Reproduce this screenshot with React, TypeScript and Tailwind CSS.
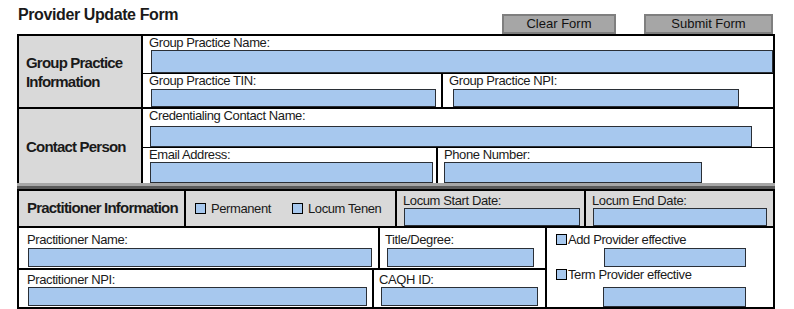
import React from 'react';

const Field = ({ className }: { className: string }) => (
  <div className={`bg-[#a7c8ee] border border-[#2a2f36] ${className}`} />
);

const Box = () => (
  <span className="inline-block w-[11px] h-[11px] shrink-0 bg-[#a7c8ee] border border-black" />
);

const Label = ({ children, className = '' }: { children: React.ReactNode; className?: string }) => (
  <div className={`text-[13px] leading-[14px] tracking-[-0.4px] whitespace-nowrap ${className}`}>{children}</div>
);

const App: React.FC = () => {
  return (
    <div className="w-[794px] h-[309px] overflow-hidden bg-white font-['Liberation_Sans',Arial,sans-serif] text-[#1a1a1a]">
      {/* Header */}
      <div className="flex h-[34px]">
        <h1 className="pl-[18px] pt-[6px] text-[16px] leading-[18px] font-bold tracking-[-0.4px]">
          Provider Update Form
        </h1>
        <div className="ml-auto mr-[21px] mt-[14px] flex gap-[28px]">
          <button className="w-[114px] h-[20px] bg-[#a6a6a6] border-2 border-[#7f7f7f] text-[13px] leading-[16px] text-[#111]">
            Clear Form
          </button>
          <button className="w-[129px] h-[20px] bg-[#a6a6a6] border-2 border-[#7f7f7f] text-[13px] leading-[16px] text-[#111]">
            Submit Form
          </button>
        </div>
      </div>

      {/* Group practice + contact */}
      <div className="ml-[17px] w-[758px] border-x-2 border-t-2 border-black">
        <div className="flex border-b-2 border-black">
          <div className="w-[124px] bg-[#d9d9d9] border-r-2 border-black flex items-center pl-[7px] text-[15px] leading-[19px] font-bold tracking-[-0.8px]">
            Group Practice
            <br />
            Information
          </div>
          <div className="flex-1 flex flex-col">
            <div className="h-[38px] border-b border-black">
              <Label className="pl-[6px]">Group Practice Name:</Label>
              <Field className="ml-[8px] h-[23px]" />
            </div>
            <div className="flex h-[33px]">
              <div className="w-[300px] border-r-2 border-black">
                <Label className="pl-[6px]">Group Practice TIN:</Label>
                <Field className="mt-[1px] ml-[8px] mr-[5px] h-[18px]" />
              </div>
              <div className="flex-1">
                <Label className="pl-[6px]">Group Practice NPI:</Label>
                <Field className="mt-[1px] ml-[10px] w-[286px] h-[18px]" />
              </div>
            </div>
          </div>
        </div>

        <div className="flex">
          <div className="w-[124px] bg-[#d9d9d9] border-r-2 border-black flex items-center pl-[7px] text-[15px] leading-[19px] font-bold tracking-[-0.8px]">
            Contact Person
          </div>
          <div className="flex-1 flex flex-col">
            <div className="h-[39px] border-b border-black">
              <Label className="pl-[6px]">Credentialing Contact Name:</Label>
              <Field className="mt-[3px] ml-[7px] w-[602px] h-[21px]" />
            </div>
            <div className="flex h-[35px]">
              <div className="w-[295px] border-r-2 border-black">
                <Label className="pl-[6px]">Email Address:</Label>
                <Field className="ml-[7px] mr-[3px] h-[21px]" />
              </div>
              <div className="flex-1">
                <Label className="pl-[6px]">Phone Number:</Label>
                <Field className="ml-[6px] w-[258px] h-[21px]" />
              </div>
            </div>
          </div>
        </div>
      </div>

      {/* Separator band */}
      <div className="ml-[17px] w-[758px] h-[3px] bg-[#a6a6a6]" />
      <div className="ml-[17px] w-[758px] h-[3px] bg-[#5a5a5a]" />

      {/* Practitioner */}
      <div className="ml-[17px] w-[758px] border-2 border-black">
        <div className="flex h-[37px] bg-[#d9d9d9] border-b-2 border-black">
          <div className="w-[167px] border-r-2 border-black flex items-center pl-[8px] text-[15px] font-bold tracking-[-0.8px] whitespace-nowrap">
            Practitioner Information
          </div>
          <div className="w-[211px] border-r-2 border-black flex items-center pl-[9px] text-[13px] leading-[14px] tracking-[-0.4px] whitespace-nowrap">
            <Box />
            <span className="ml-[5px]">Permanent</span>
            <span className="ml-[21px] flex">
              <Box />
            </span>
            <span className="ml-[5px]">Locum Tenen</span>
          </div>
          <div className="w-[189px] border-r-2 border-black pt-[3px]">
            <Label className="pl-[6px]">Locum Start Date:</Label>
            <Field className="ml-[7px] w-[176px] h-[18px]" />
          </div>
          <div className="flex-1 pt-[3px]">
            <Label className="pl-[6px]">Locum End Date:</Label>
            <Field className="ml-[7px] w-[174px] h-[18px]" />
          </div>
        </div>

        <div className="flex h-[79px]">
          <div className="w-[528px] border-r-2 border-black flex flex-col">
            <div className="flex h-[42px] border-b-2 border-black">
              <div className="w-[361px] border-r-2 border-black pt-[5px]">
                <Label className="pl-[8px]">Practitioner Name:</Label>
                <Field className="mt-[1px] ml-[9px] w-[344px] h-[19px]" />
              </div>
              <div className="flex-1 pt-[5px]">
                <Label className="pl-[5px]">Title/Degree:</Label>
                <Field className="mt-[1px] ml-[7px] w-[147px] h-[19px]" />
              </div>
            </div>
            <div className="flex flex-1">
              <div className="w-[355px] border-r-2 border-black pt-[3px]">
                <Label className="pl-[8px]">Practitioner NPI:</Label>
                <Field className="ml-[9px] w-[339px] h-[19px]" />
              </div>
              <div className="flex-1 pt-[3px]">
                <Label className="pl-[5px]">CAQH ID:</Label>
                <Field className="ml-[7px] w-[157px] h-[19px]" />
              </div>
            </div>
          </div>

          <div className="flex-1 pt-[6px] pl-[9px] text-[13px] leading-[12px] tracking-[-0.4px]">
            <div className="flex items-center h-[11px] whitespace-nowrap">
              <Box />
              <span className="ml-px">Add Provider effective</span>
            </div>
            <Field className="mt-[3px] ml-[48px] w-[142px] h-[19px]" />
            <div className="mt-[2px] flex items-center h-[11px] whitespace-nowrap">
              <Box />
              <span className="ml-px">Term Provider effective</span>
            </div>
            <Field className="mt-[7px] ml-[47px] w-[143px] h-[20px]" />
          </div>
        </div>
      </div>
    </div>
  );
};

export default App;
